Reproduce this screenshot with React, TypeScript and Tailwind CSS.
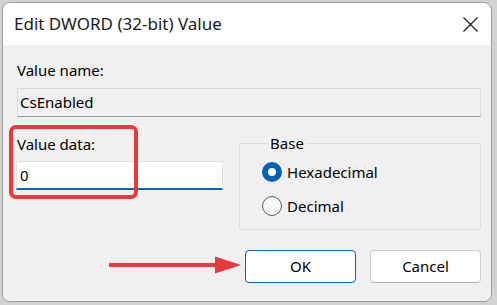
import React from 'react';

const FONT = "font-['Segoe_UI','Noto_Sans',sans-serif]";

const Radio = ({ checked, label }: { checked: boolean; label: string }) => (
  <div className="flex h-[20px] items-center gap-[5px]">
    {checked ? (
      <span className="flex h-[20px] w-[20px] items-center justify-center rounded-full bg-[#0063b1]">
        <span className="h-[8px] w-[8px] rounded-full bg-white" />
      </span>
    ) : (
      <span className="h-[20px] w-[20px] rounded-full border border-[#5c5c5c] bg-[#f7f7f7]" />
    )}
    <span className="text-[15px] leading-[20px] text-black">{label}</span>
  </div>
);

export default function App() {
  return (
    <div className={`relative h-[305px] w-[497px] overflow-hidden bg-[#d2d2d2] pl-[2px] pt-[2px] ${FONT}`}>
      {/* dialog window */}
      <div className="flex h-[300px] w-[490px] flex-col overflow-hidden rounded-[8px] border border-[#9c9c9c]">
        {/* title bar */}
        <div className="flex h-[42px] items-center justify-between bg-white pl-[11px] pr-[13px]">
          <span className="text-[17px] leading-[22px] text-[#1b1b1b]">Edit DWORD (32-bit) Value</span>
          <svg width="15" height="15" viewBox="0 0 15 15">
            <path d="M0.5 0.5 L14.5 14.5 M14.5 0.5 L0.5 14.5" stroke="#1b1b1b" strokeWidth="1.2" />
          </svg>
        </div>

        {/* body */}
        <div className="flex flex-1 flex-col bg-[#f0f0f0] pl-[14px] pr-[10px] pt-[15px]">
          <div className="text-[15px] leading-[20px] text-black">Value name:</div>
          <div className="mt-[8px] flex h-[29px] items-center border border-[#dadada] border-b-[#9a9a9a] bg-[#f0f0f0] pl-[2px] text-[15px] text-black">
            CsEnabled
          </div>

          <div className="mt-[17px] flex gap-[16px]">
            {/* value data */}
            <div className="flex w-[207px] flex-col">
              <div className="text-[15px] leading-[20px] text-black">Value data:</div>
              <div className="-ml-[1px] mt-[7px] flex h-[29px] items-center border border-[#e2e2e2] border-b-2 border-b-[#0067c0] bg-white pl-[3px] text-[15px] text-black">
                0
              </div>
            </div>

            {/* base group box */}
            <fieldset className="-mt-[1px] h-[97px] w-[243px] rounded-[2px] border border-[#dcdcdc] pl-[22px]">
              <legend className="ml-[6px] px-[2px] text-[15px] leading-[20px] text-black">Base</legend>
              <div className="mt-[9px] flex flex-col gap-[14px]">
                <Radio checked label="Hexadecimal" />
                <Radio checked={false} label="Decimal" />
              </div>
            </fieldset>
          </div>

          {/* buttons */}
          <div className="mt-[20px] flex justify-end gap-[14px]">
            <button className="h-[33px] w-[111px] rounded-[4px] border border-[#0067c0] bg-[#fdfdfd] text-[15px] text-black">
              OK
            </button>
            <button className="h-[33px] w-[111px] rounded-[4px] border border-[#d0d0d0] border-b-[#b5b5b5] bg-[#fdfdfd] text-[15px] text-black">
              Cancel
            </button>
          </div>
        </div>
      </div>

      {/* window behind, peeking below */}
      <div className="flex gap-[20px] pl-[70px] text-[15px] leading-[20px] text-[#1b2a6b]">
        <span>SourcesAuthoringStatus</span>
        <span className="ml-[160px]">DE2_TIME_TRT</span>
      </div>

      {/* annotation: red box */}
      <div className="absolute left-[9px] top-[125px] h-[74px] w-[129px] rounded-[7px] border-4 border-[#e8393c]" />

      {/* annotation: red arrow */}
      <svg className="absolute left-[105px] top-[253px]" width="140" height="24" viewBox="0 0 140 24">
        <line x1="4" y1="12" x2="112" y2="12" stroke="#e8393c" strokeWidth="4" />
        <polygon points="110,3.5 136,12 110,20.5" fill="#e8393c" />
      </svg>
    </div>
  );
}
